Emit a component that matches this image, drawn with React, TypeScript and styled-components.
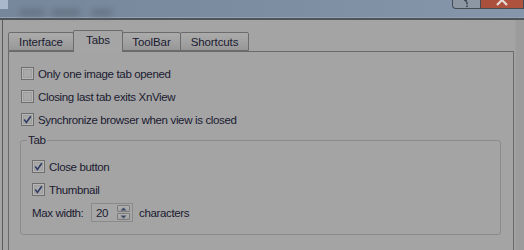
import React from "react";
import styled, { createGlobalStyle } from "styled-components";

const Global = createGlobalStyle`
  html, body { margin: 0; padding: 0; background: #a4a4a4; overflow: hidden; }
  body {
    font-family: "Liberation Sans", Arial, sans-serif;
    font-size: 11.5px;
    letter-spacing: -0.35px;
    color: #1a1a30;
  }
  * { box-sizing: border-box; }
`;

const Screen = styled.div`
  width: 524px;
  height: 250px;
  display: flex;
  flex-direction: column;
  overflow: hidden;
`;

const TitleBar = styled.div`
  height: 20px;
  flex: none;
  display: flex;
  align-items: flex-start;
  background: linear-gradient(90deg, #77879b 0%, #7d8da1 50%, #8797ab 100%);
  border-bottom: 2px solid #4f5459;
  box-shadow: inset 0 -1px 0 #93a1b1;
`;

const CornerSquare = styled.div`
  width: 8px;
  height: 9px;
  background: #a9b8cb;
  flex: none;
`;

const Blur = styled.div<{ $w: number; $ml: number }>`
  width: ${(p) => p.$w}px;
  height: 7px;
  margin: 9px 0 0 ${(p) => p.$ml}px;
  background: #5f6b7b;
  filter: blur(3px);
  opacity: 0.7;
  flex: none;
`;

const Spacer = styled.div`
  flex: 1;
`;

const CaptionButton = styled.div<{ $w: number; $bg: string; $left?: boolean }>`
  width: ${(p) => p.$w}px;
  height: 9px;
  flex: none;
  background: ${(p) => p.$bg};
  border: 1px solid #454b52;
  border-top: none;
  ${(p) => (p.$left ? "border-bottom-left-radius: 4px;" : "border-left: none;")}
  display: flex;
  justify-content: center;
  align-items: flex-end;
  overflow: hidden;
`;

const Body = styled.div`
  flex: 1;
  display: flex;
  padding-left: 2px;
  background: linear-gradient(90deg, #a4a4a4 0, #a4a4a4 515px, #9c9c9c 516px);
`;

const Frame = styled.div`
  flex: 1;
  border-left: 1px solid #5c5c5c;
  padding: 11px 0 0 5px;
  display: flex;
  flex-direction: column;
`;

const TabStrip = styled.div`
  display: flex;
  align-items: flex-end;
  height: 21px;
  padding-left: 1px;
  position: relative;
  z-index: 1;
  margin-bottom: -1px;
`;

const Tab = styled.div<{ $w: number; $active?: boolean }>`
  width: ${(p) => p.$w}px;
  height: ${(p) => (p.$active ? 22 : 19)}px;
  margin-bottom: ${(p) => (p.$active ? 0 : 1)}px;
  border: 1px solid #6c6c6c;
  border-bottom: ${(p) => (p.$active ? "none" : "1px solid #6c6c6c")};
  margin-left: -1px;
  border-radius: 2px 2px 0 0;
  background: ${(p) =>
    p.$active ? "#a5a5a5" : "linear-gradient(180deg, #ababab 0%, #a2a2a2 50%, #979797 100%)"};
  display: flex;
  justify-content: center;
  align-items: center;
  padding-top: ${(p) => (p.$active ? 0 : 1)}px;
  padding-bottom: ${(p) => (p.$active ? 3 : 0)}px;
  font-size: 11.5px;
  letter-spacing: -0.1px;
  position: relative;
  z-index: ${(p) => (p.$active ? 2 : 1)};
`;

const Panel = styled.div`
  flex: 1;
  width: 506px;
  border: 1px solid #6a6a6a;
  border-bottom: none;
  padding: 10px 12px 0 12px;
`;

const Row = styled.div`
  height: 23px;
  display: flex;
  align-items: center;
`;

const Box = styled.div`
  width: 13px;
  height: 13px;
  flex: none;
  border: 1px solid #6e6e6e;
  background: #a9a9a9;
  box-shadow: inset 0 0 0 1px #b6b6b6, inset 0 0 0 2px #9e9e9e;
  margin-right: 4px;
  display: flex;
  align-items: center;
  justify-content: center;
`;

const Label = styled.span`
  white-space: nowrap;
`;

const Group = styled.fieldset`
  margin: 2px 0 0 -1px;
  width: 481px;
  padding: 0 11px 8px 11px;
  border: 1px solid #8b8b8b;
  border-radius: 3px;
  height: 102px;
`;

const Legend = styled.legend`
  padding: 0 1px;
  margin-left: -5px;
  line-height: 14px;
`;

const GroupRows = styled.div`
  padding-top: 8px;
`;

const FieldLabel = styled.span`
  width: 59px;
  flex: none;
  white-space: nowrap;
`;

const Spin = styled.div`
  width: 42px;
  height: 19px;
  flex: none;
  border: 1px solid #8a8a8a;
  background: #a6a6a6;
  display: flex;
  align-items: center;
  padding: 0 2px 0 4px;
  margin-right: 6px;
`;

const SpinValue = styled.span`
  flex: 1;
`;

const SpinButtons = styled.div`
  width: 13px;
  height: 15px;
  display: flex;
  flex-direction: column;
  gap: 1px;
`;

const SpinBtn = styled.div`
  flex: 1;
  border: 1px solid #7c7c7c;
  background: linear-gradient(180deg, #b0b0b0, #a2a2a2);
  border-radius: 1px;
  display: flex;
  align-items: center;
  justify-content: center;
`;

const Check = () => (
  <svg width="9" height="9" viewBox="0 0 9 9">
    <path d="M1.2 4.6 L3.4 7.4 L7.8 1.2" fill="none" stroke="#303c64" strokeWidth="1.6" />
  </svg>
);

const CheckBox = ({ checked, label }: { checked?: boolean; label: string }) => (
  <Row>
    <Box>{checked && <Check />}</Box>
    <Label>{label}</Label>
  </Row>
);

const Arrow = ({ up }: { up?: boolean }) => (
  <svg width="7" height="4" viewBox="0 0 7 4">
    <path d={up ? "M0.5 3.5 L3.5 0.5 L6.5 3.5 Z" : "M0.5 0.5 L3.5 3.5 L6.5 0.5 Z"} fill="#3f4a66" />
  </svg>
);

const HelpGlyph = () => (
  <svg width="8" height="9" viewBox="0 0 8 9">
    <path d="M1.5 0 Q1.8 2 4 2.2 M4 3.2 L4 5.3 M4 6.6 L4 8" fill="none" stroke="#363c44" strokeWidth="1.6" />
  </svg>
);

const CloseGlyph = () => (
  <svg width="14" height="9" viewBox="0 0 14 9">
    <path d="M2 -4 L12 6 M12 -4 L2 6" fill="none" stroke="#e8dcd8" strokeWidth="2.2" />
  </svg>
);

export default function App() {
  return (
    <Screen>
      <Global />
      <TitleBar>
        <CornerSquare />
        <Blur $w={24} $ml={12} />
        <Blur $w={28} $ml={8} />
        <Blur $w={20} $ml={12} />
        <Spacer />
        <CaptionButton $w={29} $bg="#8d97a3" $left>
          <HelpGlyph />
        </CaptionButton>
        <CaptionButton $w={43} $bg="linear-gradient(90deg,#a8503c,#b0523d)">
          <CloseGlyph />
        </CaptionButton>
      </TitleBar>
      <Body>
        <Frame>
          <TabStrip>
            <Tab $w={66}>Interface</Tab>
            <Tab $w={50} $active>
              Tabs
            </Tab>
            <Tab $w={59}>ToolBar</Tab>
            <Tab $w={69}>Shortcuts</Tab>
          </TabStrip>
          <Panel>
            <CheckBox label="Only one image tab opened" />
            <CheckBox label="Closing last tab exits XnView" />
            <CheckBox checked label="Synchronize browser when view is closed" />
            <Group>
              <Legend>Tab</Legend>
              <GroupRows>
                <CheckBox checked label="Close button" />
                <CheckBox checked label="Thumbnail" />
                <Row>
                  <FieldLabel>Max width:</FieldLabel>
                  <Spin>
                    <SpinValue>20</SpinValue>
                    <SpinButtons>
                      <SpinBtn>
                        <Arrow up />
                      </SpinBtn>
                      <SpinBtn>
                        <Arrow />
                      </SpinBtn>
                    </SpinButtons>
                  </Spin>
                  <Label>characters</Label>
                </Row>
              </GroupRows>
            </Group>
          </Panel>
        </Frame>
      </Body>
    </Screen>
  );
}
